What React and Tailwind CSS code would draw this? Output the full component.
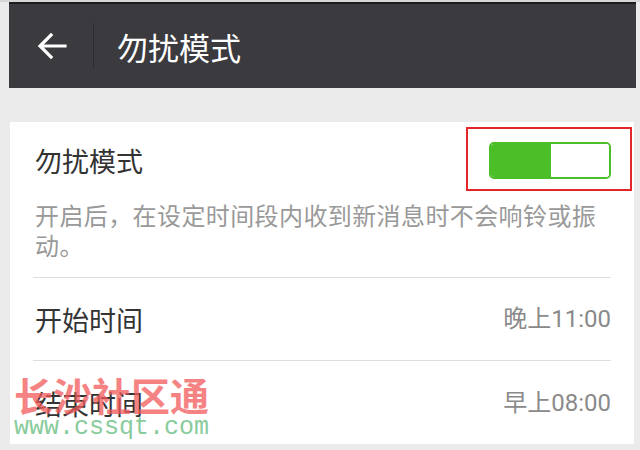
const cjk = { fontFamily: '"Noto Sans CJK SC", "Noto Sans", sans-serif' }
const num = { fontFamily: 'Roboto, "Noto Sans CJK SC", sans-serif' }

const Toggle = () => (
  <div className="relative">
    {/* red highlight box */}
    <div className="absolute -top-[15px] -bottom-[12px] -left-[23px] -right-[21px] border-2 border-[#e3262a]"></div>
    <div className="flex w-[122px] h-[37px] rounded-[5px] border-2 border-[#4cbf28] overflow-hidden">
      <div className="w-[60px] bg-[#4cbf28]"></div>
      <div className="flex-1 bg-white"></div>
    </div>
  </div>
)

const TimeRow = ({ label, value, className }) => (
  <div className={`flex items-center justify-between ${className}`}>
    <span className="text-[27px] text-[#333333] leading-none" style={cjk}>{label}</span>
    <span className="text-[24px] text-[#8a8a8a] leading-none" style={num}>{value}</span>
  </div>
)

export default function App() {
  return (
    <div className="relative w-[640px] h-[450px] overflow-hidden bg-[#ebebeb]" style={cjk}>
      <div className="h-[2px] bg-[#d6d6d6]"></div>
      {/* Header */}
      <div className="ml-[9px] w-[627px] h-[86px] bg-[#3a3a3f] border-t-2 border-[#1c1c1f] flex items-center">
        <div className="w-[84px] flex justify-center pl-[2px]">
          <svg width="30" height="26" viewBox="0 0 30 26" fill="none">
            <path d="M28 13H4M14 2L3 13l11 11" stroke="white" strokeWidth="3.2" strokeLinecap="square" />
          </svg>
        </div>
        <div className="w-px h-[46px] bg-[#2c2c30]"></div>
        <span className="ml-[23px] text-[31px] text-white leading-none">勿扰模式</span>
      </div>

      {/* Card */}
      <div className="mt-[34px] ml-[10px] w-[624px] h-[322px] bg-white pl-[25px] pr-[23px]">
        <div className="h-[76px] flex items-center justify-between">
          <span className="text-[27px] text-[#333333] leading-none">勿扰模式</span>
          <Toggle />
        </div>
        <p className="pt-[2px] pb-[17px] pr-[8px] text-[24px] leading-[30px] tracking-[0.4px] text-[#999999]">
          开启后，在设定时间段内收到新消息时不会响铃或振动。
        </p>
        <div className="-ml-[2px] h-px bg-[#dedede]"></div>
        <TimeRow label="开始时间" value="晚上11:00" className="h-[82px]" />
        <div className="-ml-[2px] h-px bg-[#dedede]"></div>
        <TimeRow label="结束时间" value="早上08:00" className="h-[84px]" />
      </div>

      {/* Watermark */}
      <div className="absolute left-[14px] top-[372px] flex flex-col items-start pointer-events-none">
        <span className="text-[39px] leading-[44px] font-bold text-[#f25a5a] opacity-75">长沙社区通</span>
        <span className="text-[25px] leading-[24px] text-[#6cbf85] opacity-80" style={{ fontFamily: '"Liberation Mono", monospace' }}>www.cssqt.com</span>
      </div>
    </div>
  )
}
